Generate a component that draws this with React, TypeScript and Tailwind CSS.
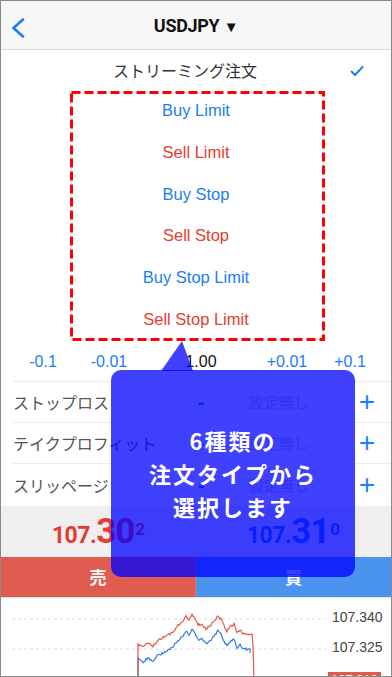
import React from 'react';

const orderTypes = [
  { name: 'Buy Limit', color: 'text-[#1a7ef2]' },
  { name: 'Sell Limit', color: 'text-[#e63b2e]' },
  { name: 'Buy Stop', color: 'text-[#1a7ef2]' },
  { name: 'Sell Stop', color: 'text-[#e63b2e]' },
  { name: 'Buy Stop Limit', color: 'text-[#1a7ef2]' },
  { name: 'Sell Stop Limit', color: 'text-[#e63b2e]' },
];

const settings = ['ストップロス', 'テイクプロフィット', 'スリッページ'];

// chart keypoints in page coords
const redKeys: [number, number][] = [
  [138, 643], [143, 646], [148, 642], [153, 645], [158, 639], [163, 637], [168, 634],
  [173, 631], [178, 624], [182, 621], [186, 615], [189, 619], [192, 613], [195, 618],
  [198, 624], [202, 623], [206, 628], [210, 625], [214, 620], [218, 615], [221, 618],
  [224, 625], [227, 630], [230, 626], [234, 623], [237, 632], [240, 629], [243, 633],
  [252, 633],
];

function noisyPath(keys: [number, number][], dy: number, seed: number) {
  const pts: string[] = [];
  for (let i = 0; i < keys.length - 1; i++) {
    const [x0, y0] = keys[i];
    const [x1, y1] = keys[i + 1];
    for (let x = x0; x < x1; x += 1) {
      const t = (x - x0) / (x1 - x0);
      const n = Math.sin(x * 12.9898 + seed) * 43758.5453;
      const j = (n - Math.floor(n) - 0.5) * 2.2;
      pts.push(`${x},${(y0 + (y1 - y0) * t + dy + j).toFixed(1)}`);
    }
  }
  const last = keys[keys.length - 1];
  pts.push(`${last[0]},${last[1] + dy}`);
  return pts;
}

function Chart() {
  const red = noisyPath(redKeys, 0, 1.3);
  const blue = noisyPath(redKeys.slice(0, -1).concat([[250, 633]]), 15, 7.1);
  return (
    <div className="relative flex-1 border-t border-[#e4e4e4] bg-white">
      <svg className="absolute inset-0" width="390" height="79" viewBox="1 597 390 79">
        <line x1="12" y1="618" x2="326" y2="618" stroke="#dcdcdc" strokeDasharray="3 3" />
        <line x1="12" y1="648" x2="326" y2="648" stroke="#dcdcdc" strokeDasharray="3 3" />
        <polyline
          points={`138,680 ${blue.join(' ')} 250,652`}
          fill="none"
          stroke="#2f7de6"
          strokeWidth="1.2"
        />
        <polyline
          points={`138,680 ${red.join(' ')} 253,645 254,680`}
          fill="none"
          stroke="#e5574a"
          strokeWidth="1.2"
        />
      </svg>
      <span className="absolute left-[331px] top-[12px] text-[14px] leading-none text-[#444]">107.340</span>
      <span className="absolute left-[331px] top-[42px] text-[14px] leading-none text-[#444]">107.325</span>
      <span className="absolute left-[327px] top-[74px] w-[53px] h-[16px] bg-[#e05a4e] text-[13px] leading-[16px] text-center text-white">
        107.310
      </span>
    </div>
  );
}

function Price({ color, lead, big, sup }: { color: string; lead: string; big: string; sup: string }) {
  return (
    <div className={`flex-1 flex items-center justify-center ${color} font-['Roboto',sans-serif] font-bold`}>
      <span className="leading-none whitespace-nowrap">
        <span className="text-[23px] tracking-[-0.5px]">{lead}</span>
        <span className="text-[35px] tracking-[-1px]">{big}</span>
        <span className="text-[17px] align-[8px] ml-[1px]">{sup}</span>
      </span>
    </div>
  );
}

export default function App() {
  return (
    <div className="relative w-[392px] h-[677px] overflow-hidden border border-[#8a8a8a] bg-white flex flex-col font-['Liberation_Sans','Noto_Sans_CJK_JP',sans-serif]">
      {/* Header */}
      <header className="h-[49px] shrink-0 flex items-center bg-[#f7f7f7] border-b border-[#dadada] relative">
        <svg className="absolute left-[9px] top-[17px]" width="16" height="20" viewBox="0 0 16 20">
          <path d="M13 1.5 L3.5 10 L13 18.5" fill="none" stroke="#1a7ef2" strokeWidth="2.6" strokeLinecap="round" strokeLinejoin="round" />
        </svg>
        <div className="flex-1 text-center font-['Roboto',sans-serif] font-bold text-[18px] tracking-[-0.3px] text-[#111]">
          USDJPY <span className="text-[15px]">▼</span>
        </div>
      </header>

      {/* Streaming */}
      <div className="h-[40px] shrink-0 flex items-center justify-center relative">
        <span className="text-[16px] text-[#333] font-['Noto_Sans_CJK_JP',sans-serif] ml-[-22px]">ストリーミング注文</span>
        <svg className="absolute left-[349px] top-[15px]" width="14" height="12" viewBox="0 0 14 12">
          <path d="M1.5 6.5 L5 10 L12.5 2" fill="none" stroke="#1a7ef2" strokeWidth="2" strokeLinecap="round" strokeLinejoin="round" />
        </svg>
      </div>

      {/* Order types */}
      <div className="shrink-0 relative">
        {orderTypes.map((o) => (
          <div key={o.name} className={`h-[41.67px] flex items-center justify-center text-[16.5px] ${o.color}`}>
            {o.name}
          </div>
        ))}
        <svg className="absolute left-[68px] top-[0px]" width="257" height="252" viewBox="0 0 257 252">
          <rect x="2.5" y="2.5" width="252" height="247" fill="none" stroke="#ff0000" strokeWidth="3" strokeDasharray="9 4" />
        </svg>
      </div>

      {/* Step row */}
      <div className="h-[41px] shrink-0 flex items-center pt-[3px] text-[16px] text-[#1a7ef2]">
        <span className="ml-[12px] w-[60px] text-center">-0.1</span>
        <span className="ml-[6px] w-[60px] text-center">-0.01</span>
        <span className="ml-[32px] w-[60px] text-center text-[#111]">1.00</span>
        <span className="ml-[26px] w-[60px] text-center">+0.01</span>
        <span className="ml-[3px] w-[60px] text-center">+0.1</span>
      </div>

      {/* Settings rows */}
      <div className="shrink-0 ml-[12px] border-t border-[#ebebeb]">
        {settings.map((s, i) => (
          <div
            key={s}
            className={`flex items-center ${i < 2 ? 'h-[41px] border-b border-[#ebebeb]' : 'h-[42px]'}`}
          >
            <span className="w-[174px] text-[16px] text-[#555] font-['Noto_Sans_CJK_JP',sans-serif] whitespace-nowrap">{s}</span>
            <span className="w-[28px] text-center text-[20px] font-semibold text-[#1a7ef2]">-</span>
            <span className="ml-[34px] text-[15px] text-[#c4c4c4] font-['Noto_Sans_CJK_JP',sans-serif]">設定無し</span>
            <span className="ml-auto mr-[16px] text-[28px] font-light leading-none text-[#1a7ef2]">+</span>
          </div>
        ))}
      </div>

      {/* Prices */}
      <div className="h-[51px] shrink-0 flex bg-[#efefef]">
        <Price color="text-[#e63b2e]" lead="107." big="30" sup="2" />
        <Price color="text-[#1a7ef2]" lead="107." big="31" sup="0" />
      </div>

      {/* Sell / Buy */}
      <div className="h-[40px] shrink-0 flex text-white text-[17px] font-bold font-['Noto_Sans_CJK_JP',sans-serif]">
        <div className="w-[195px] flex items-center justify-center bg-[#e05c50] border-r border-[#f07060]">売</div>
        <div className="flex-1 flex items-center justify-center bg-[#4a93ef]">買</div>
      </div>

      <Chart />

      {/* Callout */}
      <svg className="absolute left-[158px] top-[339px]" width="36" height="31" viewBox="0 0 36 31">
        <polygon points="23,1 2,31 34,31" fill="#0000ff" fillOpacity="0.75" />
      </svg>
      <div className="absolute left-[110px] top-[369px] w-[244px] h-[207px] rounded-[10px] bg-[#0000ff]/75 flex flex-col items-center justify-center text-white font-bold text-[22px] leading-[33px] tracking-[2px] font-['Noto_Sans_CJK_JP',sans-serif]">
        <span>6種類の</span>
        <span>注文タイプから</span>
        <span>選択します</span>
      </div>
    </div>
  );
}
